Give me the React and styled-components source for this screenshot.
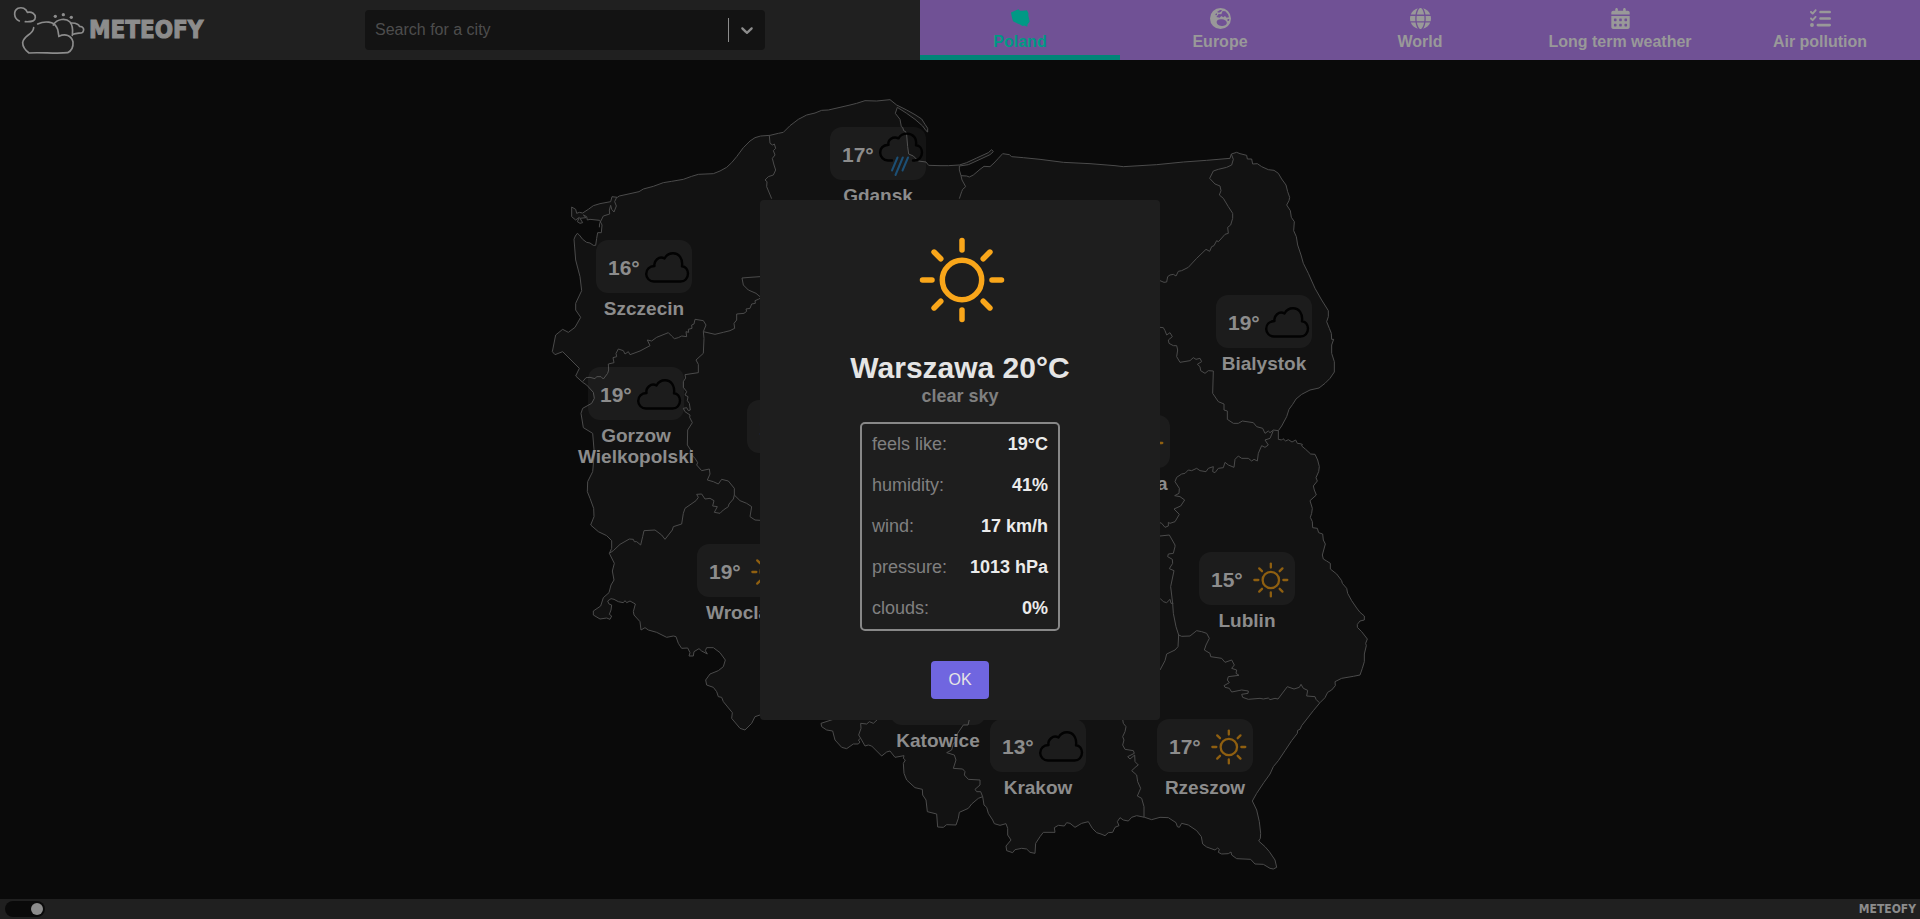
import React, { useState } from "react";
import styled, { createGlobalStyle } from "styled-components";
import { FaGlobe, FaCalendarDays, FaListCheck } from "react-icons/fa6";

const GlobalStyle = createGlobalStyle`
  *, *::before, *::after { box-sizing: border-box; }
  body {
    margin: 0;
    background: #0a0a0a;
    color: #8c8c8c;
    font-family: "Liberation Sans", Arial, sans-serif;
  }
`;

const Page = styled.div`
  display: flex;
  flex-direction: column;
  min-height: 100vh;
`;

const Header = styled.header`
  display: flex;
  height: 60px;
  background: #202020;
`;

const HeaderMain = styled.div`
  display: flex;
  flex: 1;
  align-items: center;
`;

const LogoLink = styled.a`
  display: flex;
  align-items: center;
  gap: 4px;
  width: 210px;
  height: 60px;
  color: #8c8c8c;
  text-decoration: none;
  svg { flex: none; }
`;

const Wordmark = styled.span`
  font-family: "Liberation Sans Narrow", "DejaVu Sans Condensed", sans-serif;
  font-weight: 700;
  font-size: ${(p) => (p.$small ? 12 : 24)}px;
  line-height: 1;
  -webkit-text-stroke: ${(p) => (p.$small ? 0 : 1)}px currentColor;
`;

const Search = styled.form`
  display: flex;
  align-items: center;
  width: 400px;
  height: 40px;
  margin: 0 auto;
  background: #131313;
  border-radius: 4px;
`;

const SearchInput = styled.input`
  flex: 1;
  height: 40px;
  padding: 0 10px;
  border: 0;
  outline: 0;
  background: transparent;
  color: #8c8c8c;
  font: 16px "Liberation Sans", Arial, sans-serif;
  &::placeholder { color: #4d4d4d; opacity: 1; }
`;

const SearchToggle = styled.button`
  display: flex;
  align-items: center;
  justify-content: center;
  width: 37px;
  height: 24px;
  padding: 0;
  border: 0;
  border-left: 1px solid #8c8c8c;
  background: transparent;
  color: #8c8c8c;
`;

const Nav = styled.nav`
  display: flex;
  background: #705195;
`;

const Tab = styled.a`
  display: flex;
  flex-direction: column;
  align-items: center;
  gap: 4px;
  width: 200px;
  height: 60px;
  padding-top: 8px;
  border-bottom: 5px solid ${(p) => (p.$active ? "#008578" : "transparent")};
  color: ${(p) => (p.$active ? "#009985" : "#999999")};
  font-weight: 700;
  font-size: 16px;
  line-height: 18px;
  text-decoration: none;
  svg { display: block; }
`;

const Main = styled.main`
  display: flex;
  flex: 1;
  justify-content: center;
  padding-top: 20px;
`;

const MapStage = styled.div`
  position: relative;
  flex: none;
  width: 840px;
  height: 800px;
`;

const MapSvg = styled.svg`
  display: block;
  width: 100%;
  height: 100%;
`;

const Pin = styled.button`
  position: absolute;
  left: ${(p) => p.$x - 60}px;
  top: ${(p) => p.$y}px;
  display: flex;
  flex-direction: column;
  align-items: center;
  gap: 5px;
  width: 120px;
  padding: 0;
  border: 0;
  background: transparent;
  color: #8c8c8c;
  font-family: inherit;
`;

const PinCard = styled.span`
  display: flex;
  align-items: center;
  justify-content: space-between;
  width: 96px;
  height: 53px;
  padding: 2px 0 0 12px;
  border-radius: 12px;
  background: rgba(255, 255, 255, 0.045);
`;

const Temperature = styled.span`
  font-weight: 700;
  font-size: 21px;
`;

const CityName = styled.span`
  font-weight: 700;
  font-size: 19px;
  line-height: 21px;
`;

const Footer = styled.footer`
  display: flex;
  align-items: center;
  justify-content: space-between;
  height: 20px;
  padding: 0 4px 0 5px;
  background: #202020;
`;

const ThemeSwitch = styled.input`
  appearance: none;
  display: flex;
  align-items: center;
  width: 40px;
  height: 16px;
  margin: 0;
  padding: 0 2px;
  border-radius: 8px;
  background: #0a0a0a;
  &::before {
    content: "";
    width: 12px;
    height: 12px;
    border-radius: 6px;
    background: #8c8c8c;
  }
  &:checked { justify-content: flex-end; }
`;

const Backdrop = styled.div`
  position: fixed;
  inset: 0;
  display: flex;
  align-items: center;
  justify-content: center;
`;

const Dialog = styled.section`
  display: flex;
  flex-direction: column;
  align-items: center;
  width: 400px;
  padding: 20px 20px 21px;
  border-radius: 4px;
  background: #1e1e1e;
`;

const DialogTitle = styled.h2`
  margin: 10px 0 0;
  color: #e5e5e5;
  font-size: 30px;
  line-height: 36px;
`;

const Condition = styled.p`
  margin: 0;
  color: #808080;
  font-weight: 700;
  font-size: 18px;
  line-height: 20px;
`;

const Details = styled.table`
  width: 200px;
  margin: 16px 0 30px;
  border: 2px solid #888888;
  border-radius: 5px;
  border-spacing: 0;
  font-size: 18px;
`;

const DetailName = styled.th`
  height: 41px;
  padding: 0 0 0 10px;
  color: #808080;
  font-weight: 400;
  text-align: left;
`;

const DetailValue = styled.td`
  padding: 0 10px 0 0;
  color: #ebebeb;
  font-weight: 700;
  text-align: right;
  white-space: nowrap;
`;

const OkButton = styled.button`
  width: 58px;
  height: 38px;
  border: 0;
  border-radius: 4px;
  background: #7066e0;
  color: #e5e5e5;
  font: 16px "Liberation Sans", Arial, sans-serif;
`;

const RAYS = [0, 45, 90, 135, 180, 225, 270, 315];

function Sun({ size, color }) {
  return (
    <svg width={size} height={size} viewBox="-62 -60 120 120" fill="none" stroke={color} strokeWidth="5.5" strokeLinecap="round" aria-hidden="true">
      <circle r="19.7" />
      {RAYS.map((angle) => (
        <path key={angle} d="M30 0H39.5" transform={`rotate(${angle})`} />
      ))}
    </svg>
  );
}

function Cloud({ rain }) {
  return (
    <svg width="50" height="50" viewBox="0 3 50 50" fill="none" stroke="#020202" strokeWidth="2.4" strokeLinecap="round" strokeLinejoin="round" aria-hidden="true">
      {rain ? (
        <>
          <path d="M16 33.500H12C7.500 33.500 4.200 29.800 4.200 25.700C4.200 21 7.500 18.200 12.500 17.800C11.500 12.800 17 8.800 22.500 11.300C24.500 7.800 28 6.600 31 6.600C37 6.600 41 11.300 40 18.200C43.500 18.400 46 21.500 46 25.300C46 29.800 43 33.500 38.500 33.500H37" />
          <path d="M21.500 30.500L16 43.500M26.800 30.500L19.500 48M32 30.500L26.500 43.500" stroke="#1c4f75" strokeWidth="2" />
        </>
      ) : (
        <path d="M12 41.500C7.500 41.500 4.200 38 4.200 34C4.200 29.500 7.500 26.300 12.500 26C11.500 21 17 15.500 22.500 18.500C24.500 14.800 28 13.300 31 13.300C37 13.300 41 18.500 40 26.300C43.500 26.500 46 29.800 46 33.500C46 38 43 41.500 38.500 41.500Z" />
      )}
    </svg>
  );
}

function WeatherIcon({ kind }) {
  if (kind === "sun") return <Sun size={50} color="#8f5f10" />;
  return <Cloud rain={kind === "rain"} />;
}

function LogoMark() {
  return (
    <svg width="85" height="60" viewBox="0 0 255 180" fill="none" stroke="#8c8c8c" strokeWidth="5" strokeLinecap="round" strokeLinejoin="round" aria-hidden="true">
      <path d="M58 63C40 55 40 32 54 25C66 20 78 26 82 37C96 34 106 42 106 52C106 62 98 66 76 65" />
      <path d="M113 72C134 62 162 64 170 82C176 90 174 102 177 109" />
      <path d="M101 83C100 104 70 106 68 128C68 144 78 152 87 159C120 156 170 162 203 158C216 152 220 140 219 126C214 106 196 100 177 109" />
      <path d="M160 75C172 55 198 54 210 66C221 80 218 94 217 106" />
      <path d="M212 69C232 68 238 76 238 79C250 79 254 88 248 97C242 101 232 98 219 103" />
      <g fill="#8c8c8c" stroke="none">
        <circle cx="166" cy="49" r="5" />
        <circle cx="190" cy="44" r="5" />
        <circle cx="214" cy="52" r="5" />
      </g>
    </svg>
  );
}

function PolandIcon() {
  return (
    <svg width="21" height="21" viewBox="0 0 21 21" fill="currentColor" aria-hidden="true">
      <path d="M1 4.500L6 2.200L8.500 1.300L10 2.700L12.500 2.800L17 2.300L18.500 5.500L18.300 7.500L19 10.500L19.700 13.500L17.500 16.500L17.300 18.800L14.500 17.500L12.500 18L10 16.600L7.500 15.500L3 13.300L1.800 9Z" />
    </svg>
  );
}

function EuropeIcon() {
  return (
    <svg width="21" height="21" viewBox="0 0 63 63" fill="currentColor" fillRule="evenodd" aria-hidden="true">
      <path d="M31.500 0A31.500 31.500 0 1 1 31.500 63A31.500 31.500 0 1 1 31.500 0ZM21 12L30 6L36 6L33 11L27 14ZM16 18L21 16L21 21L17 22ZM19 27L26 18L34 19L38 9L46 10L54 19L57 28L50 29L45 24L40 28L34 24L29 29ZM20 42C20 35 28 32 36 34C43 35 49 38 50 43C52 48 46 54 38 54C29 54 20 50 20 42ZM53 33L58 33L57 39L52 38Z" />
    </svg>
  );
}

// Country outline, starting at the Oder lagoon and running clockwise.
const OUTLINE = `102,478 106,468 112,460 118,465 128,478 140,487 150,489 160,496 167,496 170,475 173,458 184,458 186,435
179,421 150,418 142,420 140,410 130,405 138,413 120,415 128,428 120,430 112,425 118,412 107,420 95,410 95,381 107,388 110,400 118,397 128,399 145,388 160,377 180,371 212,365 216,350 232,352
238,348 270,341 297,335 310,327 340,319 370,308 395,304 430,298 455,289 475,283 520,281 540,273 560,262 575,248 590,230 610,203 630,183 645,173
662,168 690,166 715,160 730,157 750,137 775,118 800,105 825,99 845,91 865,90 900,82 930,75 950,70 975,62 1010,63 1050,59 1070,75 1100,90
1125,104 1145,117 1155,133 1163,145 1163,156 1158,152 1148,138 1125,118 1100,100 1072,82 1066,100 1080,118 1084,140 1088,142 1091,152 1097,155
1100,165 1103,200 1106,222 1120,228 1135,243 1158,246 1166,256 1200,257 1225,257 1258,255 1280,248 1310,234 1345,218 1355,209 1360,215
1350,224 1320,238 1285,254 1258,258 1258,270 1263,287 1280,288 1288,291 1300,285 1320,268 1332,259 1350,260 1362,249 1375,235 1388,221
1408,224 1415,230 1450,233 1500,238 1570,247 1650,251 1725,257 1750,260 1800,257 1850,254 1930,246 2000,241 2070,235 2074,222 2090,217
2100,221 2120,226 2122,237 2135,237 2138,252 2152,251 2165,260 2185,269 2202,271 2215,280 2225,297 2238,315 2243,335 2249,352 2247,362 2240,375
2251,392 2254,412 2263,425 2261,452 2269,470 2273,495 2283,525 2290,550 2305,580 2325,625 2345,660 2365,692 2365,710 2360,725 2368,745
2374,760 2375,778 2381,778 2375,795 2375,820 2383,845 2383,876 2370,895 2355,910 2337,924 2310,930 2285,943 2268,957 2258,973 2247,988
2240,1010 2225,1038 2215,1052 2215,1078 2225,1080 2229,1076 2237,1083 2245,1079 2256,1086 2267,1080 2272,1090 2280,1091 2287,1093 2285,1098 2297,1108 2312,1122 2325,1123 2333,1140
2338,1160 2336,1175 2328,1193 2332,1203 2320,1218 2323,1230 2329,1245 2310,1262 2317,1285 2315,1300 2311,1312 2317,1325 2318,1343 2332,1345
2336,1358 2348,1362 2350,1380 2356,1392 2347,1425 2350,1437 2360,1443 2371,1450 2371,1467 2390,1482 2405,1502 2407,1510 2420,1525 2423,1540
2435,1562 2450,1584 2460,1597 2473,1608 2473,1620 2460,1623 2452,1633 2452,1642 2465,1655 2482,1677 2477,1690 2479,1697 2473,1722 2473,1745
2467,1765 2460,1785 2440,1789 2405,1795 2385,1805 2386,1817 2375,1830 2363,1837 2355,1853 2340,1868 2320,1892 2285,1937 2280,1948
2273,1951 2272,1960 2255,1982 2235,2012 2215,2042 2200,2060 2190,2082 2172,2107 2150,2140 2137,2163 2150,2190 2158,2225 2162,2260
2161,2275 2156,2283 2175,2300 2188,2315 2205,2340 2210,2362 2200,2367 2190,2365 2170,2353 2145,2352 2132,2338 2090,2336 2075,2325
2073,2316 2065,2321 2045,2322 2035,2317 2038,2308 2033,2304 2025,2310 2000,2301 1988,2292 1984,2270 1970,2252 1945,2235 1925,2230 1918,2242 1912,2240 1908,2228
1885,2213 1860,2212 1835,2219 1814,2212 1790,2207 1775,2212 1765,2223 1750,2220 1740,2213 1732,2225 1737,2237 1725,2242 1718,2257 1705,2258 1695,2267 1683,2262
1670,2258 1657,2245 1645,2225 1625,2230 1605,2242 1590,2230 1580,2228 1573,2238 1555,2236 1543,2243 1545,2257 1510,2257 1500,2270 1487,2290 1485,2320 1470,2317
1460,2307 1445,2305 1425,2309 1418,2318 1400,2312 1398,2298 1413,2280 1403,2265 1403,2245 1398,2231 1380,2236 1363,2231 1358,2220 1345,2200 1340,2182 1332,2175 1328,2150 1315,2155 1295,2172 1285,2185 1258,2197
1255,2215 1248,2235 1220,2234 1210,2242 1193,2241 1190,2202 1162,2195 1158,2160 1148,2145 1147,2128 1125,2123 1100,2100 1092,2080 1090,2050 1096,2040 1090,2035 1092,2027 1065,2032
1050,2013 1040,2016 1025,2028 995,1998 985,1995 975,1998 962,1975 955,1980 960,1986 955,1992 940,1992 920,2006 905,2002 885,1980 878,1953 860,1950 845,1940
843,1930 880,1918 860,1890 760,1890 660,1905 645,1910 635,1930 615,1950 600,1945 575,1915 577,1898 550,1865 545,1852 535,1850 530,1835 520,1822 500,1815 497,1800
510,1782 535,1772 550,1760 556,1740 540,1718 520,1703 500,1703 496,1712 502,1722 485,1713 477,1706 462,1715 460,1728 447,1728 450,1718 443,1704 425,1705 415,1690 408,1670 400,1668
380,1672 350,1657 325,1650 315,1643 303,1650 300,1625 282,1605 280,1595 286,1572 270,1563 260,1568 255,1562 250,1568 235,1565 222,1558 213,1556 203,1563 207,1572 215,1575 213,1590 208,1603 215,1608 210,1618 200,1614
180,1617 160,1605 160,1593 182,1578 190,1553 207,1538 213,1515 222,1500 217,1473 223,1450 208,1420 215,1405 215,1382 200,1367 175,1355 152,1335 162,1310
161,1285 150,1255 142,1235 143,1205 158,1175 163,1120 158,1060 130,1043 123,1000 128,985 155,970 163,955 160,937 140,915 128,907 107,888
118,865 68,815 45,824 37,815 47,765 68,748 85,757 105,742 122,712 107,690 107,670 125,632 120,590 107,540`;

// Borders between the provinces.
const BORDERS = [
  "230,352 224,365 229,378 222,396 215,388 212,376 208,390 209,402 190,408 179,430 178,442",
  "688,167 690,190 698,195 703,192 707,205 700,212 705,225 697,235 702,255 707,270 700,285 685,290 675,300 681,305 680,320 695,356",
  "660,590 630,592 606,594 610,615 625,630 648,640 660,650",
  "660,655 655,658 645,662 646,670 635,672 630,685 618,687 620,694 612,700 590,702 590,720 582,730 584,745 570,752 550,757 525,763 490,755",
  "490,755 498,735 490,722 465,718 462,732 455,735 456,745 445,748 446,757 438,755 440,770 425,768 415,773 403,776 395,768 385,758 350,772 335,783 322,780 330,797 300,813 270,824 265,815 255,822 250,812 235,807 228,820 230,830 219,833 222,848 205,852 206,870 203,880 190,897 183,890 170,890 165,896 150,892 138,893 128,905",
  "490,755 492,775 490,820 468,840 475,853 475,878 435,884 437,894 430,905 430,922 440,935 435,945 444,950 442,962 448,970 451,990 445,992 440,983 430,985 435,995 450,1005 449,1012 457,1028 443,1050 442,1095 452,1110 450,1120 465,1135 473,1148 470,1155 485,1172 508,1167 510,1182 502,1200 520,1205 535,1212 545,1198 565,1203 583,1225 583,1245 600,1262 620,1270 635,1280 630,1310 645,1320 660,1321",
  "583,1245 580,1257 567,1272 565,1280 550,1290 540,1300 523,1297 532,1280 518,1278 522,1262 510,1255 495,1257 485,1242 470,1243 475,1252 468,1262 435,1285 430,1300 425,1332 400,1340 397,1350 375,1378 365,1365 345,1350 312,1352 308,1370 302,1395 290,1385 283,1385 280,1378 268,1377 240,1393 220,1412 208,1420",
  "1263,287 1266,300 1277,320 1268,328 1265,335 1258,356",
  "2074,222 2080,238 2075,255 2060,262 2035,268 2020,273 2009,295 2025,312 2040,318 2043,332 2038,345 2050,355 2065,380 2078,400 2078,415 2072,435 2063,442 2065,460 2055,463 2040,480 2035,485 2030,482 2022,497 2015,500 2009,514 1998,508 1970,535 1945,562 1925,572 1915,574 1908,588 1900,583 1890,585 1883,590 1880,606 1872,607 1860,602",
  "1860,742 1870,743 1875,752 1880,765 1890,758 1897,770 1885,780 1887,790 1900,797 1910,797 1913,810 1910,830 1920,847 1950,842 1960,833 1968,838 1980,835 1985,845 1972,853 1980,860 1982,872 1995,880 2005,872 2020,873 2018,940 2035,965 2052,972 2052,990 2062,993 2062,1018 2080,1030 2095,1030 2107,1023 2140,1028 2150,1040 2168,1045 2175,1060 2185,1053 2190,1058 2200,1050 2215,1052",
  "2200,1052 2190,1075 2175,1080 2185,1095 2175,1102 2165,1097 2155,1120 2152,1143 2142,1138 2135,1143 2125,1135 2105,1135 2095,1128 2085,1138 2082,1162 2065,1155 2055,1147 2050,1163 2035,1165 2025,1178 2018,1175 2020,1160 2005,1165 1998,1175 1980,1172 1970,1165 1955,1172 1945,1170 1935,1180 1925,1182 1910,1192 1905,1205 1918,1225 1917,1240 1904,1247 1920,1250 1934,1260 1922,1278 1902,1287 1918,1303 1905,1325 1890,1330 1885,1327 1885,1338 1875,1342 1865,1330 1860,1328",
  "1860,1368 1888,1365 1905,1395 1905,1400 1900,1420 1885,1422 1883,1430 1897,1438 1898,1450 1888,1466 1902,1472 1892,1520 1898,1570 1900,1600 1908,1640 1916,1665 1914,1700 1905,1710 1880,1722 1875,1742 1860,1770",
  "1860,1555 1870,1565 1880,1568 1890,1558 1893,1570 1900,1570",
  "1916,1665 1925,1669 1950,1668 1970,1652 1985,1655 2000,1660 2008,1675 1998,1695 1993,1710 2010,1720 2012,1730 2045,1735 2055,1747 2075,1740 2083,1755 2075,1765 2090,1770 2088,1780 2097,1786 2065,1790 2062,1800 2068,1808 2052,1817 2055,1822 2068,1825 2075,1836 2105,1830 2125,1833 2124,1840 2105,1843 2108,1852 2125,1858 2160,1855 2170,1857 2185,1854 2190,1859 2205,1855 2214,1857 2242,1820 2262,1827 2278,1822 2283,1813 2290,1825 2303,1831 2300,1848 2325,1850 2328,1858 2338,1868",
  "1748,1918 1750,1930 1758,1940 1755,1955 1748,1970 1752,1980 1748,1995 1755,2008 1780,2012 1783,2020 1763,2030 1770,2037 1784,2025 1785,2045 1795,2055 1788,2060 1775,2072 1790,2085 1793,2105 1802,2125 1792,2148 1805,2155 1812,2180 1812,2212",
  "1288,1918 1284,1935 1270,1935 1253,1960 1250,1985 1240,1990 1235,2010 1220,2018 1243,2025 1248,2040 1240,2065 1268,2067 1275,2075 1273,2085 1285,2098 1320,2100 1320,2115 1305,2128 1310,2135 1322,2135 1328,2150",
  "1013,1918 1000,1930 988,1925 980,1932 962,1930 963,1945 956,1965 962,1975",
];

const CITIES = [
  { name: "Gdansk", temp: 17, kind: "rain", x: 338, y: 47 },
  { name: "Szczecin", temp: 16, kind: "cloud", x: 104, y: 160 },
  { name: "Gorzow Wielkopolski", temp: 19, kind: "cloud", x: 96, y: 287 },
  { name: "Poznan", temp: 19, kind: "rain", x: 255, y: 320 },
  { name: "Bialystok", temp: 19, kind: "cloud", x: 724, y: 215 },
  { name: "Warszawa", temp: 20, kind: "sun", x: 582, y: 335 },
  { name: "Wroclaw", temp: 19, kind: "sun", x: 205, y: 464 },
  { name: "Lublin", temp: 15, kind: "sun", x: 707, y: 472 },
  { name: "Katowice", temp: 17, kind: "cloud", x: 398, y: 592 },
  { name: "Krakow", temp: 13, kind: "cloud", x: 498, y: 639 },
  { name: "Rzeszow", temp: 17, kind: "sun", x: 665, y: 639 },
];

const TABS = [
  { label: "Poland", icon: <PolandIcon />, active: true },
  { label: "Europe", icon: <EuropeIcon /> },
  { label: "World", icon: <FaGlobe size={21} /> },
  { label: "Long term weather", icon: <FaCalendarDays size={21} /> },
  { label: "Air pollution", icon: <FaListCheck size={21} /> },
];

const DETAILS = [
  ["feels like:", "19°C"],
  ["humidity:", "41%"],
  ["wind:", "17 km/h"],
  ["pressure:", "1013 hPa"],
  ["clouds:", "0%"],
];

export default function App() {
  const [open, setOpen] = useState(true);

  return (
    <>
      <GlobalStyle />
      <Page>
        <Header>
          <HeaderMain>
            <LogoLink href="#">
              <LogoMark />
              <Wordmark>METEOFY</Wordmark>
            </LogoLink>
            <Search role="search" onSubmit={(e) => e.preventDefault()}>
              <SearchInput type="text" aria-label="Search for a city" placeholder="Search for a city" />
              <SearchToggle type="button" aria-label="Show cities">
                <svg width="20" height="20" viewBox="0 0 20 20" fill="currentColor" aria-hidden="true">
                  <path d="M4.516 7.548c0.436-0.446 1.043-0.481 1.576 0l3.908 3.747 3.908-3.747c0.533-0.481 1.141-0.446 1.574 0 0.436 0.445 0.408 1.197 0 1.615-0.406 0.418-4.695 4.502-4.695 4.502-0.217 0.223-0.502 0.335-0.787 0.335s-0.570-0.112-0.789-0.335c0 0-4.287-4.084-4.695-4.502s-0.436-1.170 0-1.615z" />
                </svg>
              </SearchToggle>
            </Search>
          </HeaderMain>
          <Nav>
            {TABS.map((tab) => (
              <Tab key={tab.label} href="#" $active={tab.active}>
                {tab.icon}
                {tab.label}
              </Tab>
            ))}
          </Nav>
        </Header>

        <Main>
          <MapStage>
            <MapSvg viewBox="0 0 2520 2400" fill="none" stroke="#4b4b4b" strokeWidth="3" strokeLinejoin="round" aria-hidden="true">
              <polygon points={OUTLINE} fill="#121212" />
              {BORDERS.map((points) => (
                <polyline key={points} points={points} />
              ))}
            </MapSvg>
            {CITIES.map((city) => (
              <Pin key={city.name} type="button" $x={city.x} $y={city.y} onClick={() => setOpen(true)}>
                <PinCard>
                  <Temperature>{city.temp}°</Temperature>
                  <WeatherIcon kind={city.kind} />
                </PinCard>
                <CityName>{city.name}</CityName>
              </Pin>
            ))}
          </MapStage>
        </Main>

        <Footer>
          <ThemeSwitch type="checkbox" aria-label="Dark theme" defaultChecked />
          <Wordmark $small>METEOFY</Wordmark>
        </Footer>
      </Page>

      {open && (
        <Backdrop>
          <Dialog role="dialog" aria-labelledby="city-title">
            <Sun size={120} color="#f9a61a" />
            <DialogTitle id="city-title">Warszawa 20°C</DialogTitle>
            <Condition>clear sky</Condition>
            <Details>
              <tbody>
                {DETAILS.map(([name, value]) => (
                  <tr key={name}>
                    <DetailName scope="row">{name}</DetailName>
                    <DetailValue>{value}</DetailValue>
                  </tr>
                ))}
              </tbody>
            </Details>
            <OkButton type="button" onClick={() => setOpen(false)}>OK</OkButton>
          </Dialog>
        </Backdrop>
      )}
    </>
  );
}
